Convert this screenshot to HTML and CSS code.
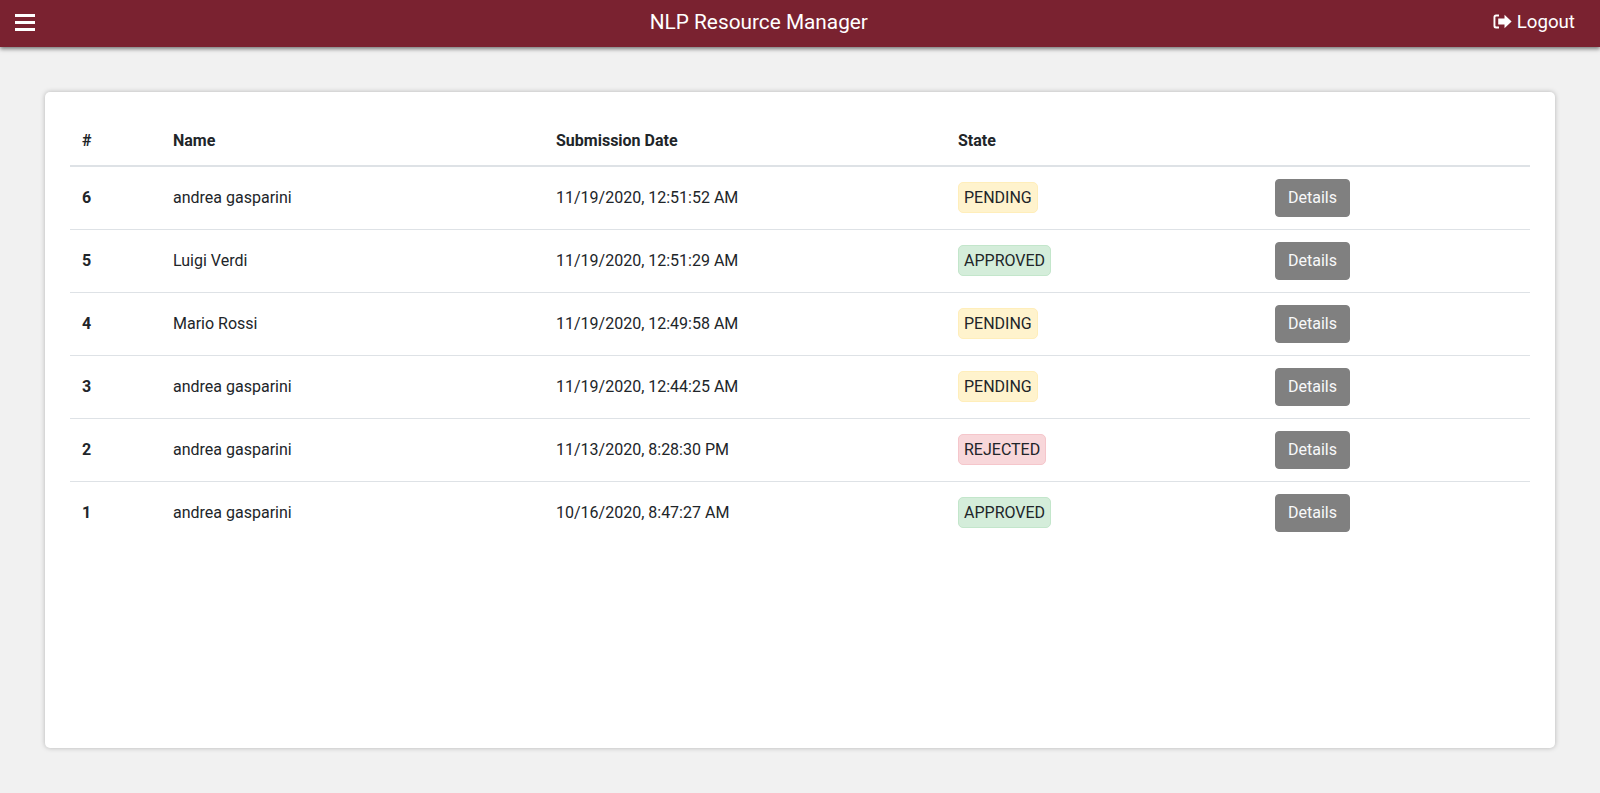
FILE: index.html
```html
<!DOCTYPE html>
<html>
<head>
	<title>NLP Resource Manager</title>
	<link rel="stylesheet" href="styles.css">
</head>
<body>
	<header class="navbar">
		<svg class="menu-icon" width="20" height="17" viewBox="0 0 20 17">
			<rect x="0" y="0" width="20" height="3" fill="#fff"/>
			<rect x="0" y="7" width="20" height="3" fill="#fff"/>
			<rect x="0" y="14" width="20" height="3" fill="#fff"/>
		</svg>
		<div class="navbar-title">NLP Resource Manager</div>
		<a class="logout" href="#">
			<svg class="logout-icon" width="19" height="15" viewBox="0 0 19 15">
				<path d="M6 0.5H3Q0.5 0.5 0.5 3V12Q0.5 14.5 3 14.5H6V12.6H3.2Q2.4 12.6 2.4 11.8V3.2Q2.4 2.4 3.2 2.4H6Z" fill="#fff"/>
				<path d="M11.5 0.8L18.6 7.5L11.5 14.2V10.4H5.2V4.6H11.5Z" fill="#fff"/>
			</svg>
			Logout
		</a>
	</header>

	<main class="card">
		<table class="requests">
			<thead>
				<tr>
					<th class="col-id">#</th>
					<th class="col-name">Name</th>
					<th class="col-date">Submission Date</th>
					<th class="col-state">State</th>
					<th></th>
				</tr>
			</thead>
			<tbody>
				<tr>
					<th>6</th>
					<td>andrea gasparini</td>
					<td>11/19/2020, 12:51:52 AM</td>
					<td><span class="badge pending">PENDING</span></td>
					<td><button class="details">Details</button></td>
				</tr>
				<tr>
					<th>5</th>
					<td>Luigi Verdi</td>
					<td>11/19/2020, 12:51:29 AM</td>
					<td><span class="badge approved">APPROVED</span></td>
					<td><button class="details">Details</button></td>
				</tr>
				<tr>
					<th>4</th>
					<td>Mario Rossi</td>
					<td>11/19/2020, 12:49:58 AM</td>
					<td><span class="badge pending">PENDING</span></td>
					<td><button class="details">Details</button></td>
				</tr>
				<tr>
					<th>3</th>
					<td>andrea gasparini</td>
					<td>11/19/2020, 12:44:25 AM</td>
					<td><span class="badge pending">PENDING</span></td>
					<td><button class="details">Details</button></td>
				</tr>
				<tr>
					<th>2</th>
					<td>andrea gasparini</td>
					<td>11/13/2020, 8:28:30 PM</td>
					<td><span class="badge rejected">REJECTED</span></td>
					<td><button class="details">Details</button></td>
				</tr>
				<tr>
					<th>1</th>
					<td>andrea gasparini</td>
					<td>10/16/2020, 8:47:27 AM</td>
					<td><span class="badge approved">APPROVED</span></td>
					<td><button class="details">Details</button></td>
				</tr>
			</tbody>
		</table>
	</main>
</body>
</html>
```

FILE: styles.css
```css
* {
	box-sizing: border-box;
}

body {
	margin: 0;
	height: 793px;
	overflow: hidden;
	background-color: #f1f1f1;
	color: #212529;
	font-family: Roboto, "Liberation Sans", sans-serif;
	font-size: 16px;
	line-height: 24px;
}

.navbar {
	display: flex;
	justify-content: space-between;
	align-items: center;
	height: 47px;
	padding: 0 25px 0 15px;
	background-color: #7a2230;
	color: #fff;
	box-shadow: 0 2px 4px rgba(0, 0, 0, 0.5);
}

.menu-icon {
	display: block;
	margin-bottom: 2px;
}

.navbar-title {
	margin-right: 10px;
	margin-bottom: 3px;
	font-size: 20.8px;
}

.logout {
	display: flex;
	align-items: center;
	gap: 5px;
	margin-bottom: 4px;
	color: #fff;
	font-size: 18.72px;
	text-decoration: none;
}

.card {
	margin: 45px 45px 0;
	height: 656px;
	padding: 25px;
	background-color: #fff;
	border-radius: 5px;
	box-shadow: 0 0 5px rgba(0, 0, 0, 0.25);
}

.requests {
	width: 100%;
	border-collapse: collapse;
	table-layout: fixed;
}

.requests th,
.requests td {
	padding: 12px;
	text-align: left;
	vertical-align: middle;
	font-weight: 400;
}

.requests th {
	font-weight: 700;
}

.requests thead th {
	border-bottom: 2px solid #dee2e6;
}

.requests tbody th,
.requests tbody td {
	border-top: 1px solid #dee2e6;
}

.requests tbody tr:first-child th,
.requests tbody tr:first-child td {
	border-top: 0;
}

.col-id {
	width: 91px;
}

.col-name {
	width: 383px;
}

.col-date {
	width: 402px;
}

.col-state {
	width: 317px;
}

.badge {
	display: block;
	width: fit-content;
	margin: -1px 0 1px;
	padding: 3px 5px 2px;
	border: 1px solid transparent;
	border-radius: 5px;
}

.pending {
	background-color: #fff3cd;
	border-color: #ffeeba;
}

.approved {
	background-color: #d4edda;
	border-color: #c3e6cb;
}

.rejected {
	background-color: #f8d7da;
	border-color: #f5c6cb;
}

.details {
	display: block;
	padding: 6px 12px;
	border: 1px solid #808080;
	border-radius: 4px;
	background-color: #808080;
	color: #f8f9fa;
	font-family: inherit;
	font-size: 16px;
	line-height: 24px;
}
```
